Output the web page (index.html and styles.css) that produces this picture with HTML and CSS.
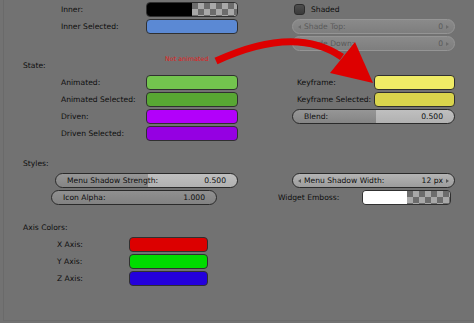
FILE: index.html
```html
<!DOCTYPE html>
<html>
<head>
<meta charset="utf-8">
<link rel="stylesheet" href="styles.css">
</head>
<body>
<div class="panel">
  <div class="block">
    <div class="col col-left">
      <div class="row prop"><span class="lbl w85">Inner:</span><span class="sw w92"><i class="part c-black"></i><i class="part checker"></i></span></div>
      <div class="row prop"><span class="lbl w85">Inner Selected:</span><span class="sw w92 c-blue"></span></div>
    </div>
    <div class="col col-right">
      <div class="row check-row"><span class="checkbox"></span><span class="lbl">Shaded</span></div>
      <div class="num field disabled"><span class="arr arr-l"></span><span>Shade Top:</span><span>0</span><span class="arr arr-r"></span></div>
      <div class="num field disabled"><span class="arr arr-l"></span><span>Shade Down:</span><span>0</span><span class="arr arr-r"></span></div>
    </div>
  </div>

  <div class="heading h-state">State:</div>
  <div class="block">
    <div class="col col-left">
      <div class="row prop"><span class="lbl w85">Animated:</span><span class="sw w92 c-anim"></span></div>
      <div class="row prop"><span class="lbl w85">Animated Selected:</span><span class="sw w92 c-anim-sel"></span></div>
      <div class="row prop"><span class="lbl w85">Driven:</span><span class="sw w92 c-driven"></span></div>
      <div class="row prop"><span class="lbl w85">Driven Selected:</span><span class="sw w92 c-driven-sel"></span></div>
    </div>
    <div class="col col-right">
      <div class="row key-row"><span class="lbl w77">Keyframe:</span><span class="sw w81 c-key"></span></div>
      <div class="row key-row"><span class="lbl w77">Keyframe Selected:</span><span class="sw w81 c-key-sel"></span></div>
      <div class="num field slider fill-blend"><span>Blend:</span><span>0.500</span></div>
    </div>
  </div>

  <div class="heading h-styles">Styles:</div>
  <div class="block">
    <div class="col col-left">
      <div class="num slider s-shadow fill-shadow"><span>Menu Shadow Strength:</span><span>0.500</span></div>
      <div class="num slider s-alpha fill-full"><span>Icon Alpha:</span><span>1.000</span></div>
    </div>
    <div class="col col-right">
      <div class="num field numfield"><span class="arr arr-l"></span><span>Menu Shadow Width:</span><span>12 px</span><span class="arr arr-r"></span></div>
      <div class="row emboss-row"><span class="lbl w84">Widget Emboss:</span><span class="sw w89"><i class="part c-white"></i><i class="part checker"></i></span></div>
    </div>
  </div>

  <div class="heading h-axis">Axis Colors:</div>
  <div class="block">
    <div class="col col-left">
      <div class="row axis-row"><span class="lbl w72">X Axis:</span><span class="sw w79 c-x"></span></div>
      <div class="row axis-row"><span class="lbl w72">Y Axis:</span><span class="sw w79 c-y"></span></div>
      <div class="row axis-row"><span class="lbl w72">Z Axis:</span><span class="sw w79 c-z"></span></div>
    </div>
  </div>
</div>

<span class="note">Not animated</span>
<svg class="arrow" width="474" height="323" viewBox="0 0 474 323">
  <path d="M216 61 Q295 24.5 342 57" fill="none" stroke="#dd0000" stroke-width="7"/>
  <polygon points="330,73 355,42 373,83" fill="#dd0000"/>
</svg>
</body>
</html>
```

FILE: styles.css
```css
* { box-sizing: border-box; margin: 0; padding: 0; }
html, body { width: 474px; height: 323px; overflow: hidden; }
body {
  background: #727272;
  font-family: "DejaVu Sans", sans-serif;
  font-size: 7.6px;
  color: #0e0e0e;
  position: relative;
}
.panel {
  margin-left: 3px;
  border-left: 1px solid #6a6a6a;
  border-bottom: 1px solid #6c6c6c;
  height: 321px;
  padding-top: 2px;
}
.block { display: flex; align-items: flex-start; }
.col { display: flex; flex-direction: column; gap: 2px; }
.col-left { width: 236px; }
.col-right { width: 234px; }

.heading { height: 15px; line-height: 15px; padding-left: 19px; margin-bottom: 2px; }
.h-state { margin-top: 7px; }
.h-styles { margin-top: 15px; }
.h-axis { margin-top: 15px; }

.row { display: flex; align-items: center; height: 15px; }
.lbl { line-height: 15px; white-space: nowrap; flex: none; }
.w85 { width: 85px; }
.w77 { width: 77px; }
.w84 { width: 84px; }
.w72 { width: 72px; }
.w92 { width: 92px; }
.w81 { width: 81px; }
.w89 { width: 89px; }
.w79 { width: 79px; }

.prop { padding-left: 57px; }
.axis-row { padding-left: 53px; }
.key-row { padding-left: 57px; }
.emboss-row { padding-left: 38px; }
.check-row { padding-left: 54px; }

.sw {
  display: flex;
  height: 15px;
  border: 1px solid #303030;
  border-radius: 4px;
  overflow: hidden;
  flex: none;
}
.part { display: block; flex: 1; height: 100%; }
.checker {
  background: repeating-conic-gradient(#a8a8a8 0 25%, #6c6c6c 0 50%) 0 0 / 12px 12px;
}
.c-black { background: #000; }
.c-white { background: #fff; }
.c-blue { background: #5b89d4; }
.c-anim { background: #73c44e; }
.c-anim-sel { background: #58a733; }
.c-driven { background: #b200fa; }
.c-driven-sel { background: #9500e2; }
.c-key { background: #f0ec66; }
.c-key-sel { background: #d9d44c; }
.c-x { background: #dc0000; }
.c-y { background: #00dc00; }
.c-z { background: #2400dc; }

.checkbox {
  width: 11px; height: 11px;
  border: 1px solid #2c2c2c;
  border-radius: 3px;
  background: linear-gradient(#4e4e4e, #3a3a3a);
  margin-right: 6px;
  flex: none;
}

.num {
  position: relative;
  display: flex;
  justify-content: space-between;
  align-items: center;
  height: 15px;
  line-height: 13px;
  border: 1px solid #2a2a2a;
  border-radius: 7.5px;
  padding: 0 11px;
  white-space: nowrap;
  flex: none;
}
.field { margin-left: 52px; width: 163px; }
.s-shadow { margin-left: 51px; width: 183px; }
.s-alpha { margin-left: 47px; width: 166px; }

.fill-shadow {
  background: linear-gradient(rgba(255,255,255,.1), rgba(0,0,0,.04)),
              linear-gradient(to right, #8a8a8a 51%, #b8b8b8 51%);
}
.fill-blend {
  background: linear-gradient(rgba(255,255,255,.1), rgba(0,0,0,.04)),
              linear-gradient(to right, #8a8a8a 51.5%, #b8b8b8 51.5%);
}
.fill-full {
  background: linear-gradient(rgba(255,255,255,.08), rgba(0,0,0,.04)), #878787;
}
.numfield {
  background: linear-gradient(#b4b4b4, #9c9c9c);
}
.disabled {
  background: linear-gradient(#8a8a8a, #7e7e7e);
  border-color: #959595;
  color: #5a5a5a;
}
.arr {
  position: absolute;
  top: 5px;
  width: 0; height: 0;
  border-top: 2px solid transparent;
  border-bottom: 2px solid transparent;
}
.arr-l { left: 5px; border-right: 3px solid #555; }
.arr-r { right: 5px; border-left: 3px solid #555; }
.disabled .arr-l { border-right-color: #6a6a6a; }
.disabled .arr-r { border-left-color: #6a6a6a; }

.note {
  position: absolute;
  left: 165px;
  top: 55px;
  font-size: 6.4px;
  line-height: 8px;
  color: #e02020;
  white-space: nowrap;
}
.arrow {
  position: absolute;
  left: 0;
  top: 0;
  pointer-events: none;
}
```
